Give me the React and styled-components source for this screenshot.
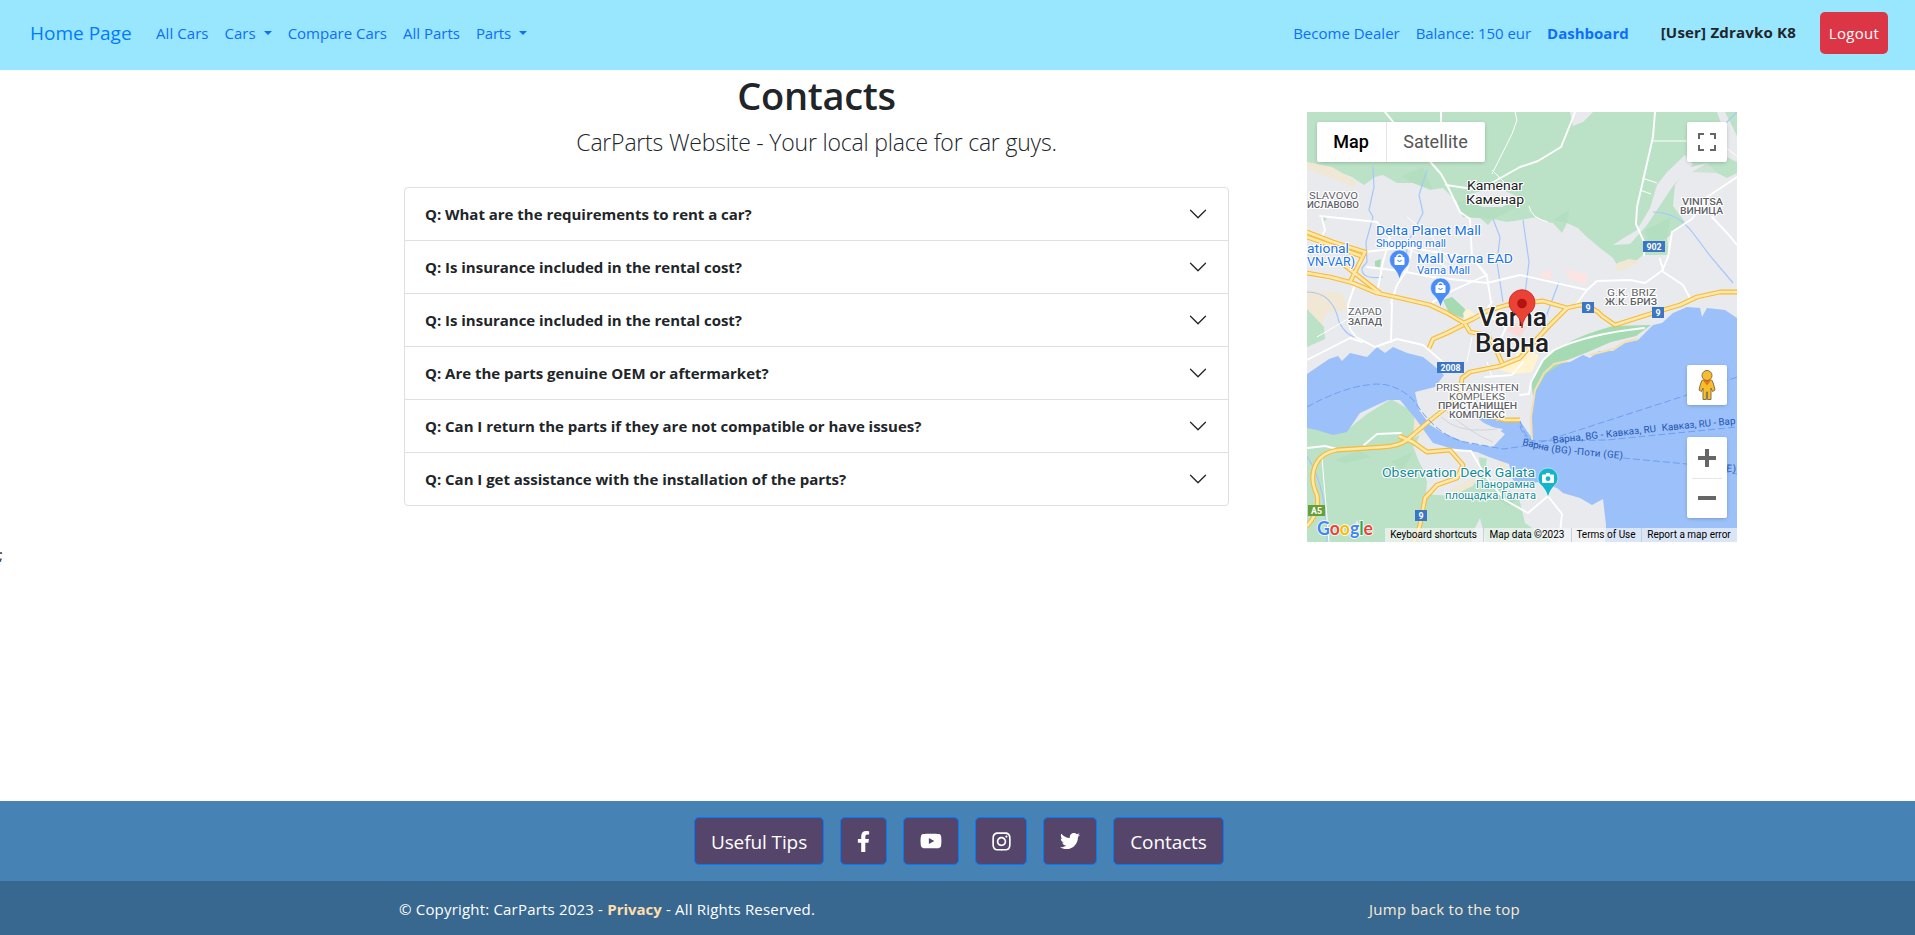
import React from "react";
import styled, { createGlobalStyle } from "styled-components";
import { FaFacebookF, FaYoutube, FaInstagram, FaTwitter } from "react-icons/fa";

const GlobalStyle = createGlobalStyle`
  * { box-sizing: border-box; }
  body {
    margin: 0;
    background: #fff;
    color: #212529;
    font-family: "Open Sans", "Noto Sans", sans-serif;
    font-size: 15px;
    line-height: 24px;
    overflow: hidden;
  }
  a { color: inherit; text-decoration: none; }
`;

const Page = styled.div`
  display: flex;
  flex-direction: column;
  height: 935px;
  width: 100%;
`;

/* ---------- navigation ---------- */

const Navbar = styled.nav`
  display: flex;
  align-items: center;
  flex: none;
  height: 70px;
  padding: 0 27px 5px 30px;
  background: #99e6ff;
  color: #0d6efd;
  white-space: nowrap;
`;

const Brand = styled.a`
  width: 126px;
  font-size: 19px;
  color: #007bff;
`;

const NavGroup = styled.div`
  display: flex;
  align-items: center;
  gap: 16px;
  margin-left: ${(p) => (p.$end ? "auto" : 0)};
`;

const NavLink = styled.a`
  display: inline-flex;
  align-items: center;
  font-weight: ${(p) => (p.$bold ? 700 : 400)};
  letter-spacing: ${(p) => p.$track || 0}px;
`;

const Caret = styled.span`
  margin: 0 0 0 8px;
  border: 4px solid transparent;
  border-top-color: currentColor;
  border-bottom: 0;
`;

const UserName = styled.strong`
  margin: -2px 8px 0 16px;
  color: #212529;
  font-weight: 700;
  letter-spacing: 0.2px;
`;

const LogoutButton = styled.button`
  width: 68px;
  height: 42px;
  margin-top: 1px;
  padding: 0 0 1px;
  border: 0;
  border-radius: 5px;
  background: #dc3545;
  color: #fff;
  font: inherit;
  letter-spacing: 0.3px;
`;

/* ---------- main content ---------- */

const Main = styled.main`
  display: flex;
  align-items: flex-start;
  flex: none;
  height: 470px;
  padding-left: 404px;
`;

const FaqColumn = styled.section`
  width: 825px;
  text-align: center;
`;

const Title = styled.h1`
  margin: 2px 0 8px;
  font-size: 38px;
  font-weight: 600;
  line-height: 46px;
  letter-spacing: -0.3px;
`;

const Lead = styled.p`
  margin: 0 0 28px;
  font-size: 23px;
  font-weight: 300;
  line-height: 33px;
  letter-spacing: -0.2px;
`;

const Accordion = styled.div`
  border: 1px solid #dfdfdf;
  border-radius: 4px;
`;

const Question = styled.div`
  display: flex;
  align-items: center;
  justify-content: space-between;
  height: 53px;
  padding: 0 20px;
  font-weight: 700;
  letter-spacing: -0.02px;
  & + & { border-top: 1px solid #dfdfdf; }
  &:first-child { height: 52px; }
`;

const Chevron = styled.svg`
  width: 20px;
  height: 20px;
  fill: #212529;
`;

const MapCard = styled.aside`
  position: relative;
  width: 430px;
  height: 430px;
  margin: 42px 0 0 78px;
  overflow: hidden;
  font-family: Roboto, sans-serif;
`;

const MapDrawing = styled.svg`
  display: block;
  font-family: Roboto, sans-serif;
`;

const MapControl = styled.div`
  position: absolute;
  right: 10px;
  top: ${(p) => p.$top}px;
  width: 40px;
  height: ${(p) => p.$height || 40}px;
  display: flex;
  flex-direction: column;
  align-items: center;
  justify-content: center;
  background: #fff;
  border-radius: 2px;
  box-shadow: 0 1px 4px -1px rgba(0, 0, 0, 0.3);
`;

const ZoomHalf = styled.div`
  display: flex;
  align-items: center;
  justify-content: center;
  width: 30px;
  height: 40px;
  & + & { border-top: 1px solid #e6e6e6; }
`;

const MapTypes = styled.div`
  position: absolute;
  left: 10px;
  top: 10px;
  display: flex;
  height: 40px;
  border-radius: 2px;
  background: #fff;
  box-shadow: 0 1px 4px -1px rgba(0, 0, 0, 0.3);
`;

const MapType = styled.button`
  width: ${(p) => p.$width}px;
  padding: 0 1px 1px 0;
  border: 0;
  background: none;
  color: ${(p) => (p.$active ? "#000" : "#565656")};
  font: ${(p) => (p.$active ? 500 : 400)} 18px Roboto, sans-serif;
  & + & { border-left: 1px solid #e6e6e6; }
`;

const MapCredits = styled.div`
  position: absolute;
  right: 0;
  bottom: 0;
  display: flex;
  height: 14px;
  background: rgba(245, 245, 245, 0.7);
  color: #000;
  font-size: 10px;
  line-height: 14px;
  white-space: nowrap;
`;

const Credit = styled.span`
  width: ${(p) => p.$width}px;
  padding-right: 1px;
  text-align: center;
  & + & { border-left: 1px solid rgba(170, 190, 220, 0.6); }
`;

const StrayMark = styled.div`
  flex: 1;
  margin-left: -1px;
  padding-top: 2px;
`;

/* ---------- footer ---------- */

const SocialBar = styled.div`
  display: flex;
  flex: none;
  justify-content: center;
  gap: 16px;
  height: 80px;
  padding: 16px 0 0 3px;
  background: #4682b4;
`;

const SocialButton = styled.a`
  display: flex;
  align-items: center;
  justify-content: center;
  width: ${(p) => p.$width}px;
  height: 48px;
  padding-top: ${(p) => (p.$icon ? 0 : 2)}px;
  border: 1px solid #007bff;
  border-radius: 5px;
  background: #55456b;
  color: #fff;
  font-size: 19px;
  letter-spacing: -0.1px;
`;

const LegalBar = styled.footer`
  display: flex;
  flex: none;
  justify-content: space-between;
  height: 54px;
  padding: 16px 395px 0 399px;
  background: #386890;
  color: #fff;
  letter-spacing: 0.19px;
  white-space: pre;
`;

const Privacy = styled.a`
  color: #ffdead;
  font-weight: 700;
  letter-spacing: 0;
`;

const TopLink = styled.a`
  color: #faebd7;
  letter-spacing: 0.28px;
`;

const questions = [
  "Q: What are the requirements to rent a car?",
  "Q: Is insurance included in the rental cost?",
  "Q: Is insurance included in the rental cost?",
  "Q: Are the parts genuine OEM or aftermarket?",
  "Q: Can I return the parts if they are not compatible or have issues?",
  "Q: Can I get assistance with the installation of the parts?",
];

/* ---------- map ---------- */

const highways = [
  "M0 161 L23 165 L46 171 L70 181 L93 186 L123 193 L140 201 L157 211 L166 207 L180 199 L200 193 L236 189 L260 196 L273 193 Q286 194 295 204 L308 213 L346 201 L373 193 L390 185 L413 180 L430 180",
  "M260 196 L240 216 L228 229 L212 247",
  "M0 120 L26 130 L58 140 L50 156 L43 170",
  "M36 152 L50 163 L73 181",
  "M0 125 L26 134 L54 144",
  "M156 213 L140 221 L126 227 L122 236",
  "M158 212 L163 220 L180 223 L187 233 L195 251",
  "M213 246 L193 254 L163 260 L155 266 L153 284 L140 295 L120 311 L100 328 Q92 334 76 335 L30 338 Q14 341 9 352 Q2 366 10 383 Q13 400 0 414",
  "M92 324 L106 330 L120 340 L143 338 L156 353 L150 366 L130 373 L118 386 L113 413 L107 430",
  "M213 308 L198 308 L186 305",
];

const streets = [
  "M78 0 L96 22 L120 46 L134 62 L140 73 L153 100 L163 107 L165 145 L180 165 L184 190",
  "M134 0 V38 M139 73 L172 78 L213 55",
  "M213 55 L231 49 L254 35 L265 8 L268 0",
  "M348 0 L346 25 L330 95 L329 112 L338 132 L337 143",
  "M13 104 L70 110 L83 126 L76 150 L70 181",
  "M15 106 L18 118 L12 130",
  "M58 140 L100 135 L145 143 L165 145 L180 163 L140 181 L126 190",
  "M106 132 L100 158 L90 173 L84 191",
  "M60 155 L94 159 L125 165 L180 171 L213 163",
  "M213 163 L280 178 L290 169 L323 168 L338 171 L356 158 L353 147",
  "M280 178 L268 194",
  "M430 65 L400 85 L385 107 L365 120 L361 145 L355 159 L376 173 L384 188",
  "M405 105 L421 122 L430 133",
  "M47 175 L41 193 L43 217 L49 225 L68 235 L90 227 L116 233 L138 252",
  "M0 248 L43 226 L55 230",
  "M85 191 L84 230",
  "M185 190 L176 202 L200 213 L190 235",
  "M337 216 Q280 222 247 238 L236 248 L224 270 L222 282 L213 283",
  "M57 333 L70 322 L94 321",
  "M0 336 L18 334 L30 337",
  "M143 338 L164 339 L179 365 L198 388 L221 401 L241 384 L255 402 L252 430",
  "M178 265 L205 263 L216 250",
];

function Pin({ x, y, color, children }) {
  return (
    <g transform={`translate(${x} ${y})`}>
      <path d="M0 19 Q-2 12 -6 8 A10 10 0 1 1 6 8 Q2 12 0 19Z" fill={color} stroke="#fff" strokeWidth=".5" />
      {children}
    </g>
  );
}

const Bag = () => (
  <g>
    <rect x="-5" y="-3" width="10" height="8" rx="1" fill="#fff" />
    <path d="M-2.5 -2 V-4 Q0 -7 2.5 -4 V-2" fill="none" stroke="#fff" strokeWidth="1.4" />
    <path d="M-2 0 Q0 3 2 0" fill="none" stroke="#4a8cf7" strokeWidth="1.2" />
  </g>
);

function Shield({ x, y, w = 12, color = "#3a76c4", label }) {
  return (
    <g>
      <rect x={x} y={y} width={w} height="11" fill={color} />
      <text x={x + w / 2} y={y + 8.6} textAnchor="middle" fontSize="8.8" fontWeight="700" fill="#fff">{label}</text>
    </g>
  );
}

function Label({ x, y, w, size, weight = 400, color = "#4d5156", children }) {
  return (
    <text
      x={x}
      y={y}
      textLength={w}
      lengthAdjust="spacingAndGlyphs"
      fontSize={size}
      fontWeight={weight}
      fill={color}
      stroke="#fff"
      strokeWidth="2.2"
      strokeLinejoin="round"
      paintOrder="stroke"
    >
      {children}
    </text>
  );
}

function VarnaMap() {
  return (
    <MapDrawing width="430" height="430" viewBox="0 0 430 430">
      <rect width="430" height="430" fill="#e8eaed" />

      {/* northern woods */}
      <path
        fill="#bbe2c6"
        d="M0 0 H430 V61 L420 66 L410 61 L400 51 L380 56 L368 73 L366 94 L378 110 L360 126 L362 143 L336 143 L330 148 L310 153 L306 146 L293 136 L280 125 L271 116 L260 111 L255 121 L246 111 L240 110 L230 105 L213 108 L200 110 L186 107 L181 113 L173 106 L156 105 L150 90 L136 76 L123 78 L106 71 L90 71 L76 63 L68 65 L57 73 L45 65 L20 55 L0 50Z"
      />
      <path fill="#abd9b9" d="M150 90 L190 82 L213 94 L186 107 L156 105Z M95 64 L116 55 L125 77 L106 71Z M246 108 L262 98 L260 111Z M338 118 L364 105 L360 126 L342 133Z M385 60 L400 51 L410 61Z" opacity=".45" />
      <path fill="#e8eaed" d="M263 0 H286 L276 10 L266 14Z M378 43 L386 52 L366 74 L354 92 L340 113 L323 132 L306 133 L315 127 L330 118 L343 96 L350 73 L360 60Z M410 0 H418 L430 24 V50 L418 44 L417 20Z M163 82 L190 75 L213 86 L195 95 L176 95 L160 90Z" />
      <path fill="#f0e7d4" d="M0 50 L25 55 L50 70 L47 75 L30 68 L0 57Z M0 178 L35 181 L42 198 L20 200 L12 222 L0 197Z M310 151 L322 147 L333 149 L318 158 L308 159Z" />
      <path fill="#fce4e2" d="M234 161 L244 158 L245 167 L234 166Z M258 157 L280 162 L280 173 L262 167Z" />
      <path fill="#bbe2c6" d="M0 197 L17 215 L18 227 L0 235Z M15 103 L20 107 L15 111Z" />
      <path fill="#a5dab3" d="M136 188 L145 185 L158 197 L156 206 L142 201Z M68 149 L74 147 L73 156 L68 154Z" />
      <path fill="#fff3d0" d="M156 201 L161 197 L168 202 L158 208Z M216 232 L232 244 L225 260 L207 262 L193 258 L205 249Z" />
      <path fill="#fcdad8" d="M205 210 L220 215 L213 225 L200 219Z" />

      {/* land south of the lake */}
      <path fill="#bbe2c6" d="M0 312 L40 318 L60 302 L84 287 L110 302 L115 318 L108 334 L120 370 L119 382 L145 384 L174 368 L172 345 L197 350 L205 373 L213 390 L218 411 L245 430 H0Z" />
      <path fill="#e8eaed" d="M106 334 L143 338 L166 340 L172 352 L166 373 L146 384 L122 382 L121 365 L112 350Z M180 345 L202 350 L213 388 L203 379 L190 376 L178 362Z M205 375 L235 370 L280 387 L299 390 V430 H245 L230 405Z M45 418 L50 408 L55 420Z M166 420 L173 406 L179 430 H165Z" />
      <path fill="#f0e7d4" d="M108 298 L118 303 L121 320 L106 326Z M142 378 L170 364 L166 374 L148 382Z M190 347 L198 348 L200 360 L194 358Z" />
      <path fill="#abd9b9" d="M28 348 L52 339 L64 345 L38 351Z M84 350 L106 340 L96 358Z M184 380 L208 389 L202 394 L188 386Z" opacity=".5" />

      {/* lake, channel and sea */}
      <path
        fill="#9cc0f9"
        d="M0 262 L22 247 L31 244 L35 249 L43 241 L60 245 L70 235 L78 241 L86 235 L100 241 L116 245 L126 253 L137 263 L128 275 L108 280 L112 298 L123 313 L136 321 L160 331 L186 335 L198 322 L190 317 L177 311 L163 300 L178 300 L190 309 L213 309 L225 326 L224 300 L228 278 L236 261 L246 251 L263 250 L276 243 L283 246 L292 239 L306 239 L318 231 L331 228 L346 213 L355 211 L366 201 L380 195 L393 196 L395 205 L400 196 L418 198 L430 206 V430 H298 L299 413 L296 387 L285 393 L273 386 L256 381 L250 376 L230 370 L218 377 L206 368 L202 352 L182 345 L170 340 L143 336 L126 331 L108 306 L93 288 L81 288 L70 293 L53 301 L40 320 L26 323 L10 318 L0 316Z"
      />
      <path fill="#a5dab3" d="M344 213 L306 214 Q276 222 257 233 L238 245 L224 268 L226 284 L239 262 L258 249 L281 240 L304 230 L329 224Z" />
      <path fill="none" stroke="#f4dfb2" strokeWidth="2" d="M225 328 L224 305 L228 278 L237 261 L247 252 L260 249 M283 243 L306 237 L318 230 L331 227" />
      <path fill="#e8eaed" d="M134 289 L150 304 L178 314 L196 317 L193 320 L184 321 L187 332 L165 329 L138 318 L124 311 L122 298Z" />

      {/* streams */}
      <g fill="none" stroke="#a6c7fa" strokeWidth="1.2">
        <path d="M66 55 L67 75 L62 98 L66 105 L59 130 L60 150 L55 156 Q54 168 76 165" />
        <path d="M120 58 L112 83 L116 101 L102 128 L98 148" />
        <path d="M186 107 L193 125 L190 150 L196 190" />
        <path d="M216 108 L222 150 L217 190 M252 170 L240 202 L235 222" />
        <path d="M346 100 Q370 100 386 121 L404 145 L426 171" />
        <path d="M0 180 Q26 180 32 210 Q40 225 50 225 M0 344 Q20 375 20 430" />
        <path d="M430 0 L415 15" />
      </g>
      <g fill="none" stroke="#fff" strokeWidth="1.9" strokeLinejoin="round" strokeLinecap="round">
        {streets.map((d) => <path key={d} d={d} />)}
      </g>
      <g fill="none" stroke="#fff" strokeWidth="1">
        <path d="M185 62 L205 22 L210 8 L208 0 M185 58 L205 78 M344 29 L380 29 M335 66 L350 71 M333 78 L344 82" />
        <path d="M100 105 L125 125 L140 150 M80 127 L140 155 M10 225 L44 205 M190 200 L215 185 M165 225 L160 250 M180 222 L200 240 M185 265 L180 250 M222 94 Q224 106 241 110 M15 346 L22 430 M418 35 L430 44" />
      </g>
      <path fill="none" stroke="#d2d5da" strokeWidth="1" d="M134 305 Q150 320 178 318 L190 317 M140 300 Q165 322 186 330" />

      {/* highways */}
      <g fill="none" strokeLinejoin="round">
        {highways.map((d) => <path key={d} d={d} stroke="#f6b93b" strokeWidth="4.8" />)}
        {highways.map((d) => <path key={d} d={d} stroke="#ffe9a8" strokeWidth="2.6" />)}
      </g>

      {/* ferry lines */}
      <g fill="none" stroke="#6f9ff0" strokeWidth="1" strokeDasharray="7 3">
        <path d="M0 295 Q35 276 60 273 Q88 268 108 290 Q130 324 158 330 L196 337 L225 333 L238 329 L380 283 L430 265" />
        <path d="M213 309 Q218 325 226 329 L300 328 L430 315" />
        <path d="M213 314 Q218 331 240 336 M316 346 L380 352 L430 362" />
      </g>

      <Label x={2} y={87} w={49} size={9.2} color="#5f6368">SLAVOVO</Label>
      <Label x={0} y={96} w={52} size={9} weight={500} color="#5f6368">ИСЛАВОВО</Label>
      <Label x={160} y={78} w={56} size={13} color="#202124">Kamenar</Label>
      <Label x={159} y={92} w={58} size={13} color="#202124">Каменар</Label>
      <Label x={375} y={93} w={41} size={8.8} weight={500} color="#5f6368">VINITSA</Label>
      <Label x={373} y={102} w={43} size={8.8} weight={500} color="#5f6368">ВИНИЦА</Label>
      <Label x={69} y={123} w={105} size={13.3} color="#1a73e8">Delta Planet Mall</Label>
      <Label x={69} y={135} w={70} size={10.8} color="#1a73e8">Shopping mall</Label>
      <Label x={110} y={151} w={96} size={13.3} color="#1a73e8">Mall Varna EAD</Label>
      <Label x={110} y={162} w={53} size={10.8} color="#1a73e8">Varna Mall</Label>
      <Label x={0} y={141} w={42} size={13.3} color="#1a73e8">ational</Label>
      <Label x={0} y={154} w={48} size={13} color="#1a73e8">VN-VAR)</Label>
      <Label x={41} y={203} w={34} size={9} color="#5f6368">ZAPAD</Label>
      <Label x={41} y={213} w={34} size={9} weight={500} color="#5f6368">ЗАПАД</Label>
      <Label x={300} y={184} w={49} size={9.3} color="#5f6368">G.K. BRIZ</Label>
      <Label x={298} y={193} w={52} size={9.3} weight={500} color="#5f6368">Ж.К. БРИЗ</Label>
      <Label x={129} y={279} w={83} size={9.3} color="#5f6368">PRISTANISHTEN</Label>
      <Label x={142} y={288} w={56} size={9.3} color="#5f6368">KOMPLEKS</Label>
      <Label x={131} y={297} w={79} size={9.3} weight={500} color="#5f6368">ПРИСТАНИЩЕН</Label>
      <Label x={142} y={306} w={56} size={9.3} weight={500} color="#5f6368">КОМПЛЕКС</Label>
      <Label x={171} y={214} w={69} size={25} weight={500} color="#202124">Varna</Label>
      <Label x={168} y={240} w={74} size={25} weight={500} color="#202124">Варна</Label>
      <Label x={75} y={365} w={153} size={13.3} color="#128c98">Observation Deck Galata</Label>
      <Label x={169} y={376} w={59} size={10.8} color="#128c98">Панорамна</Label>
      <Label x={138} y={387} w={91} size={10.8} color="#128c98">площадка Галата</Label>

      <g fontSize="9.8" fill="#1f57b5">
        <text transform="translate(246 331.5) rotate(-6.5)" textLength="104">Варна, BG - Кавказ, RU</text>
        <text transform="translate(355 319) rotate(-5.5)" textLength="74">Кавказ, RU - Вар</text>
        <text transform="translate(215 333) rotate(13)" textLength="27">Варна</text>
        <text transform="translate(244 340) rotate(5.5)" textLength="72">(BG) -Поти (GE)</text>
        <text transform="translate(412 359) rotate(3)" textLength="17">GE)</text>
      </g>

      <Shield x={336} y={129} w={22} label="902" />
      <Shield x={275} y={190} label="9" />
      <Shield x={345} y={195} label="9" />
      <Shield x={130} y={250} w={27} label="2008" />
      <Shield x={108} y={398} label="9" />
      <Shield x={1} y={393} w={17} color="#689f38" label="A5" />

      <Pin x={92.5} y={148} color="#4a8cf7"><Bag /></Pin>
      <Pin x={133.5} y={176} color="#4a8cf7"><Bag /></Pin>
      <Pin x={241} y={366} color="#12b5cb">
        <rect x="-6" y="-3.5" width="12" height="8.5" rx="1" fill="#fff" />
        <rect x="-2" y="-5" width="4" height="2" fill="#fff" />
        <circle cy=".7" r="2.4" fill="#12b5cb" />
      </Pin>

      {/* selected place */}
      <path d="M215 216 Q214 205 205 199 A13 13 0 1 1 225 199 Q216 205 215 216Z" fill="#ea4335" stroke="#c5221f" strokeWidth=".8" />
      <circle cx="215" cy="191.5" r="4.8" fill="#b31412" />

      <text x="10" y="422.5" fontSize="19" textLength="56" lengthAdjust="spacingAndGlyphs" fontWeight="700" stroke="#fff" strokeWidth="1.6" paintOrder="stroke" fontFamily="Lato, sans-serif">
        <tspan fill="#4285f4">G</tspan><tspan fill="#ea4335">o</tspan><tspan fill="#fbbc04">o</tspan><tspan fill="#4285f4">g</tspan><tspan fill="#34a853">l</tspan><tspan fill="#ea4335">e</tspan>
      </text>
    </MapDrawing>
  );
}

const Pegman = () => (
  <svg width="18" height="32" viewBox="0 0 18 32">
    <path d="M4.5 11 H13.5 Q15 12 17 21 L14.5 22.5 L13 19 V30.5 H9.6 V23 H8.4 V30.5 H5 V19 L3.5 22.5 L1 21 Q3 12 4.5 11Z" fill="#fbbc2b" stroke="#7e7245" strokeWidth="1" />
    <path d="M5 11.2 H13 L9 16.5Z" fill="#e8711a" />
    <circle cx="9" cy="6.5" r="5" fill="#fbbc2b" stroke="#7e7245" strokeWidth="1" />
  </svg>
);

export default function App() {
  return (
    <Page>
      <GlobalStyle />
      <Navbar>
        <Brand href="#">Home Page</Brand>
        <NavGroup>
          <NavLink href="#" $track={0.07}>All Cars</NavLink>
          <NavLink href="#">Cars<Caret /></NavLink>
          <NavLink href="#">Compare Cars</NavLink>
          <NavLink href="#">All Parts</NavLink>
          <NavLink href="#" $track={-0.2}>Parts<Caret /></NavLink>
        </NavGroup>
        <NavGroup $end>
          <NavLink href="#">Become Dealer</NavLink>
          <NavLink href="#" $track={-0.05}>Balance: 150 eur</NavLink>
          <NavLink href="#" $bold>Dashboard</NavLink>
          <UserName>[User] Zdravko K8</UserName>
          <LogoutButton>Logout</LogoutButton>
        </NavGroup>
      </Navbar>

      <Main>
        <FaqColumn>
          <Title>Contacts</Title>
          <Lead>CarParts Website - Your local place for car guys.</Lead>
          <Accordion>
            {questions.map((q, i) => (
              <Question key={i}>
                {q}
                <Chevron viewBox="0 0 16 16">
                  <path fillRule="evenodd" d="M1.646 4.646a.5.5 0 0 1 .708 0L8 10.293l5.646-5.647a.5.5 0 0 1 .708.708l-6 6a.5.5 0 0 1-.708 0l-6-6a.5.5 0 0 1 0-.708z" />
                </Chevron>
              </Question>
            ))}
          </Accordion>
        </FaqColumn>

        <MapCard>
          <VarnaMap />
          <MapTypes>
            <MapType $active $width={69}>Map</MapType>
            <MapType $width={99}>Satellite</MapType>
          </MapTypes>
          <MapControl $top={10}>
            <svg width="18" height="18" viewBox="0 0 18 18" fill="#666">
              <path d="M0 0v6h2V2h4V0zM12 0v2h4v4h2V0zM0 12v6h6v-2H2v-4zM16 12v4h-4v2h6v-6z" />
            </svg>
          </MapControl>
          <MapControl $top={253}><Pegman /></MapControl>
          <MapControl $top={325} $height={81}>
            <ZoomHalf>
              <svg width="18" height="18" fill="#666"><path d="M7 0h4v7h7v4h-7v7H7v-7H0V7h7z" /></svg>
            </ZoomHalf>
            <ZoomHalf>
              <svg width="18" height="18" fill="#666"><path d="M0 7h18v4H0z" /></svg>
            </ZoomHalf>
          </MapControl>
          <MapCredits>
            <Credit $width={98}>Keyboard shortcuts</Credit>
            <Credit $width={88}>Map data ©2023</Credit>
            <Credit $width={70}>Terms of Use</Credit>
            <Credit $width={96}>Report a map error</Credit>
          </MapCredits>
        </MapCard>
      </Main>

      <StrayMark>;</StrayMark>

      <SocialBar>
        <SocialButton href="#" $width={130}>Useful Tips</SocialButton>
        <SocialButton href="#" $icon $width={47}><FaFacebookF size={21} /></SocialButton>
        <SocialButton href="#" $icon $width={56}><FaYoutube size={22} /></SocialButton>
        <SocialButton href="#" $icon $width={52}><FaInstagram size={21} /></SocialButton>
        <SocialButton href="#" $icon $width={54}><FaTwitter size={20} /></SocialButton>
        <SocialButton href="#" $width={111}>Contacts</SocialButton>
      </SocialBar>
      <LegalBar>
        <span>© Copyright: CarParts 2023 - <Privacy href="#">Privacy</Privacy> - All Rights Reserved.</span>
        <TopLink href="#">Jump back to the top</TopLink>
      </LegalBar>
    </Page>
  );
}
